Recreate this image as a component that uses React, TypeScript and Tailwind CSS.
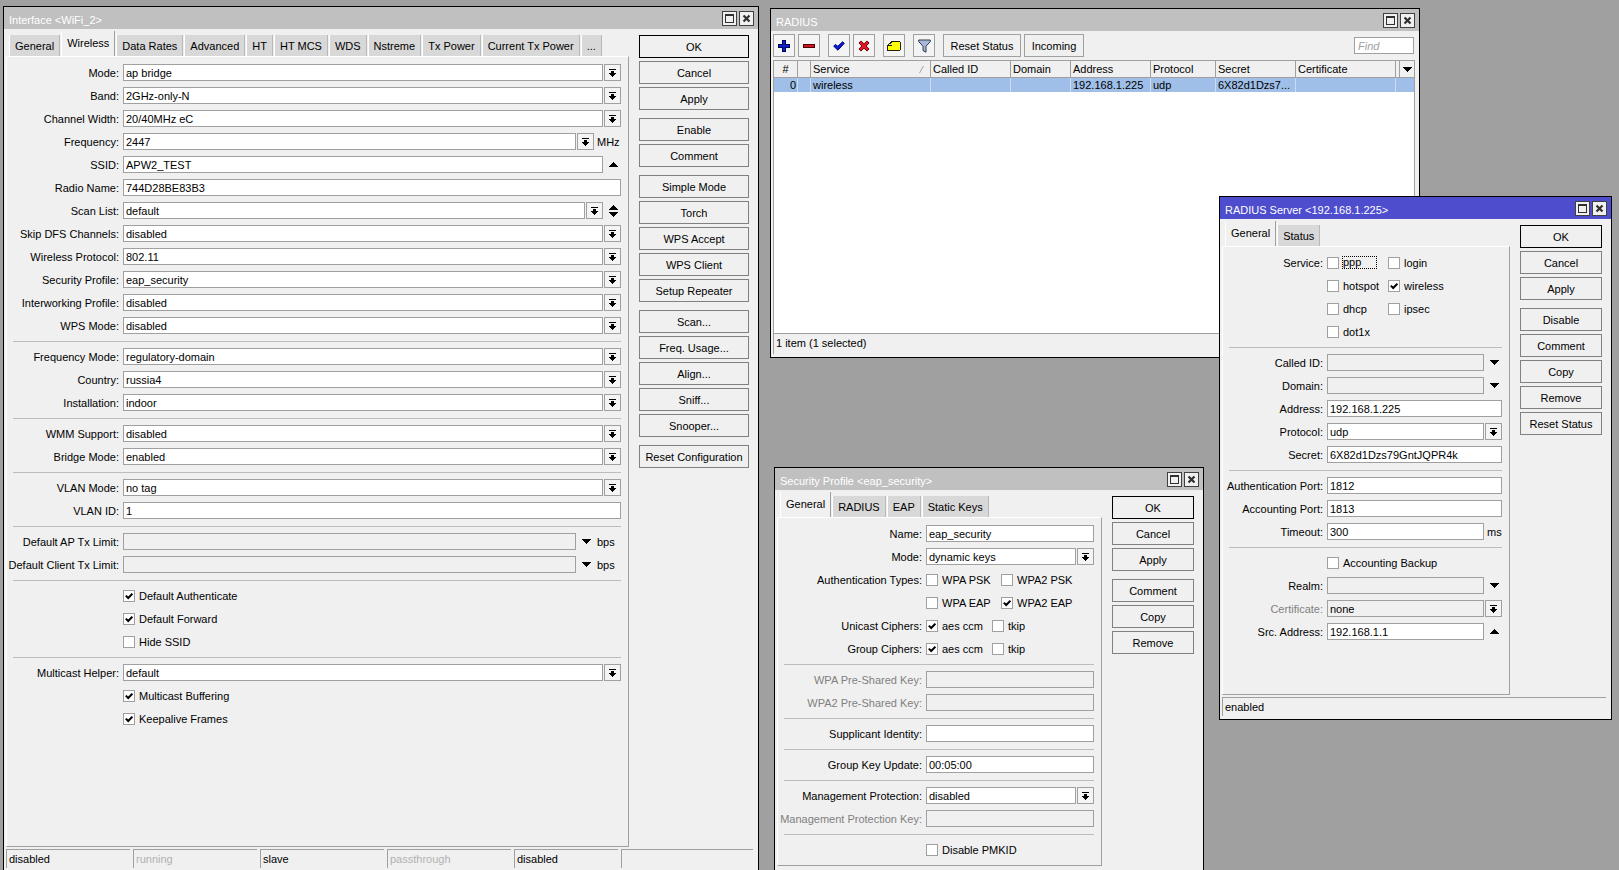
import { PropsWithChildren, ReactNode, useId } from "react";
import clsx from "clsx";

type Arrow = "drop" | "down" | "up" | "both";

const DropIcon = () => (
  <svg width="7" height="8" viewBox="0 0 7 8" shapeRendering="crispEdges" aria-hidden="true">
    <path d="M0 0h7v1H0zM2 2h3v2h2v1H6v1H5v1H4v1H3V7H2V6H1V5H0V4h2z" />
  </svg>
);

const DownIcon = () => (
  <svg width="9" height="5" viewBox="0 0 9 5" shapeRendering="crispEdges" aria-hidden="true">
    <path d="M0 0h9v1H8v1H7v1H6v1H5v1H4V4H3V3H2V2H1V1H0z" />
  </svg>
);

const UpIcon = () => (
  <svg width="9" height="5" viewBox="0 0 9 5" shapeRendering="crispEdges" aria-hidden="true">
    <path d="M0 5h9V4H8V3H7V2H6V1H5V0H4v1H3v1H2v1H1v1H0z" />
  </svg>
);

const CheckIcon = () => (
  <svg
    width="8"
    height="8"
    viewBox="0 0 8 8"
    className="pointer-events-none absolute left-0.5 top-0.5 hidden peer-checked:block"
    aria-hidden="true"
  >
    <path d="M.8 3.6l2.4 2.4L7.4 1.6" fill="none" stroke="#000" strokeWidth="2" />
  </svg>
);

const ArrowButton = ({ kind, label }: { kind: Arrow; label: string }) => (
  <button
    type="button"
    aria-label={`${label} ${kind}`}
    className={clsx(
      "flex h-[17px] w-[17px] shrink-0 flex-col items-center justify-center gap-0.5",
      kind === "drop" ? "border border-[#a0a0a0] bg-[#f4f4f4]" : "pl-0.5",
    )}
  >
    {kind === "drop" && <DropIcon />}
    {(kind === "up" || kind === "both") && <UpIcon />}
    {(kind === "down" || kind === "both") && <DownIcon />}
  </button>
);

const Row = ({ label, htmlFor, muted, children }: PropsWithChildren<{ label?: string; htmlFor?: string; muted?: boolean }>) => (
  <div className="col-span-2 grid h-[17px] grid-cols-subgrid items-center">
    {label ? (
      <label htmlFor={htmlFor} className={clsx("flex justify-end whitespace-nowrap", muted && "text-[#808080]")}>
        {label}:
      </label>
    ) : (
      <span />
    )}
    <div className="flex min-w-0 items-center gap-px">{children}</div>
  </div>
);

interface FieldProps {
  label: string;
  value?: string;
  arrows?: Arrow[];
  unit?: string;
  off?: boolean;
  muted?: boolean;
}

const Field = ({ label, value = "", arrows = [], unit, off, muted }: FieldProps) => {
  const id = useId();
  const box = clsx(
    "h-[17px] min-w-0 flex-1 appearance-none rounded-none border border-[#a0a0a0] px-0.5 leading-[15px] outline-none",
    off ? "bg-[#f0f0f0]" : "bg-white",
  );
  return (
    <Row label={label} htmlFor={id} muted={muted}>
      {arrows[0] === "drop" ? (
        <select id={id} className={clsx(box, "pt-px")} defaultValue={value}>
          <option>{value}</option>
        </select>
      ) : (
        <input id={id} type="text" className={box} defaultValue={value} />
      )}
      {arrows.map((kind) => (
        <ArrowButton key={kind} kind={kind} label={label} />
      ))}
      {unit && <span className={clsx("pl-0.5", unit === "ms" ? "w-[17px]" : "w-[26px]")}>{unit}</span>}
    </Row>
  );
};

const Check = ({ label, checked, focused, className }: { label: string; checked?: boolean; focused?: boolean; className?: string }) => (
  <label className={clsx("flex items-center gap-1 whitespace-nowrap", className)}>
    <span className="relative size-3 shrink-0">
      <input
        type="checkbox"
        defaultChecked={checked}
        className="peer block size-3 appearance-none border border-[#a0a0a0] bg-white"
      />
      <CheckIcon />
    </span>
    <span className={clsx(focused && "w-[33px] leading-[11px] outline-1 outline-dotted outline-black")}>{label}</span>
  </label>
);

const Divider = () => <hr className="col-span-2 h-0.5 border-0 border-b border-[#bcbcbc]" />;

const TitleButton = ({ label, children }: PropsWithChildren<{ label: string }>) => (
  <button
    type="button"
    aria-label={label}
    className="flex size-[15px] items-center justify-center border border-[#404040] bg-[#f0f0f0] text-[#303030]"
  >
    {children}
  </button>
);

const Window = ({ title, active, className, children }: PropsWithChildren<{ title: string; active?: boolean; className: string }>) => (
  <section className={clsx("absolute flex flex-col border border-black bg-[#f0f0f0]", className)}>
    <header
      className={clsx(
        "flex h-[22px] shrink-0 items-center gap-0.5 pl-[5px] pr-1 text-white",
        active ? "bg-[#4d4dcd]" : "bg-[#c0c0c0]",
      )}
    >
      <h2 className="flex-1 pt-[3px]">{title}</h2>
      <TitleButton label="Maximize">
        <svg width="9" height="9" viewBox="0 0 9 9" shapeRendering="crispEdges" aria-hidden="true">
          <path d="M0 0h9v9H0zM1 2v6h7V2z" fill="currentColor" fillRule="evenodd" />
        </svg>
      </TitleButton>
      <TitleButton label="Close">
        <svg width="9" height="9" viewBox="0 0 9 9" aria-hidden="true">
          <path d="M1.5 1.5l6 6M7.5 1.5l-6 6" stroke="currentColor" strokeWidth="2.2" />
        </svg>
      </TitleButton>
    </header>
    {children}
  </section>
);

const Tabs = ({ items, current }: { items: string[]; current: string }) => (
  <div role="tablist" className="flex h-[27px] items-end gap-px pl-[3px]">
    {items.map((item) => (
      <button
        key={item}
        type="button"
        role="tab"
        aria-selected={item === current}
        className={clsx(
          "whitespace-nowrap border-l border-r border-l-white px-[5px]",
          item === current
            ? "-mb-px h-[26px] border-r-[#a0a0a0] bg-[#f0f0f0] pb-0.5"
            : "h-[21px] border-r-[#b8b8b8] bg-[#d8d8d8]",
        )}
      >
        {item}
      </button>
    ))}
  </div>
);

const Actions = ({ groups, className }: { groups: string[][]; className: string }) => (
  <div className={clsx("ml-2.5 mr-[9px] flex shrink-0 flex-col gap-2 pt-1.5", className)}>
    {groups.map((group) => (
      <div key={group[0]} className="flex flex-col gap-[3px]">
        {group.map((name) => (
          <button
            key={name}
            type="button"
            className={clsx("h-[23px] whitespace-nowrap border", name === "OK" ? "border-black" : "border-[#808080]")}
          >
            {name}
          </button>
        ))}
      </div>
    ))}
  </div>
);

interface FormProps {
  tabs: string[];
  tab: string;
  groups: string[][];
  actionsClass: string;
  panelClass: string;
}

const Form = ({ tabs, tab, groups, actionsClass, panelClass, children }: PropsWithChildren<FormProps>) => (
  <div className="flex flex-1">
    <div className="flex min-w-0 flex-1 flex-col pl-0.5">
      <Tabs items={tabs} current={tab} />
      <div
        className={clsx(
          "grid flex-1 content-start gap-x-1 gap-y-1.5 border border-b-[#a0a0a0] border-l-white border-r-[#a0a0a0] border-t-white pl-1.5 pr-[7px] pt-[7px]",
          panelClass,
        )}
      >
        {children}
      </div>
    </div>
    <Actions groups={groups} className={actionsClass} />
  </div>
);

const StatusCell = ({ className, children }: { className?: string; children?: ReactNode }) => (
  <div className={clsx("h-[19px] border-l border-t border-[#a0a0a0] pl-0.5 leading-[18px]", className)}>{children}</div>
);

const InterfaceWindow = () => (
  <Window title="Interface <WiFi_2>" className="-bottom-0.5 left-[3px] top-1.5 w-[756px]">
    <Form
      tabs={["General", "Wireless", "Data Rates", "Advanced", "HT", "HT MCS", "WDS", "Nstreme", "Tx Power", "Current Tx Power", "..."]}
      tab="Wireless"
      panelClass="grid-cols-[106px_1fr]"
      actionsClass="w-[110px]"
      groups={[
        ["OK", "Cancel", "Apply"],
        ["Enable", "Comment"],
        ["Simple Mode", "Torch", "WPS Accept", "WPS Client", "Setup Repeater"],
        ["Scan...", "Freq. Usage...", "Align...", "Sniff...", "Snooper..."],
        ["Reset Configuration"],
      ]}
    >
      <Field label="Mode" value="ap bridge" arrows={["drop"]} />
      <Field label="Band" value="2GHz-only-N" arrows={["drop"]} />
      <Field label="Channel Width" value="20/40MHz eC" arrows={["drop"]} />
      <Field label="Frequency" value="2447" arrows={["drop"]} unit="MHz" />
      <Field label="SSID" value="APW2_TEST" arrows={["up"]} />
      <Field label="Radio Name" value="744D28BE83B3" />
      <Field label="Scan List" value="default" arrows={["drop", "both"]} />
      <Field label="Skip DFS Channels" value="disabled" arrows={["drop"]} />
      <Field label="Wireless Protocol" value="802.11" arrows={["drop"]} />
      <Field label="Security Profile" value="eap_security" arrows={["drop"]} />
      <Field label="Interworking Profile" value="disabled" arrows={["drop"]} />
      <Field label="WPS Mode" value="disabled" arrows={["drop"]} />
      <Divider />
      <Field label="Frequency Mode" value="regulatory-domain" arrows={["drop"]} />
      <Field label="Country" value="russia4" arrows={["drop"]} />
      <Field label="Installation" value="indoor" arrows={["drop"]} />
      <Divider />
      <Field label="WMM Support" value="disabled" arrows={["drop"]} />
      <Field label="Bridge Mode" value="enabled" arrows={["drop"]} />
      <Divider />
      <Field label="VLAN Mode" value="no tag" arrows={["drop"]} />
      <Field label="VLAN ID" value="1" />
      <Divider />
      <Field label="Default AP Tx Limit" arrows={["down"]} unit="bps" off />
      <Field label="Default Client Tx Limit" arrows={["down"]} unit="bps" off />
      <Divider />
      <Row>
        <Check label="Default Authenticate" checked />
      </Row>
      <Row>
        <Check label="Default Forward" checked />
      </Row>
      <Row>
        <Check label="Hide SSID" />
      </Row>
      <Divider />
      <Field label="Multicast Helper" value="default" arrows={["drop"]} />
      <Row>
        <Check label="Multicast Buffering" checked />
      </Row>
      <Row>
        <Check label="Keepalive Frames" checked />
      </Row>
    </Form>
    <footer className="flex gap-[3px] pb-[3px] pl-0.5 pr-[5px] pt-0.5">
      <StatusCell className="w-[124px]">disabled</StatusCell>
      <StatusCell className="w-[124px] text-[#b0b0b0]">running</StatusCell>
      <StatusCell className="w-[124px]">slave</StatusCell>
      <StatusCell className="w-[124px] text-[#b0b0b0]">passthrough</StatusCell>
      <StatusCell className="w-[104px]">disabled</StatusCell>
      <StatusCell className="flex-1" />
    </footer>
  </Window>
);

const ToolButton = ({ label, className, children }: PropsWithChildren<{ label: string; className?: string }>) => (
  <button
    type="button"
    aria-label={label}
    className={clsx("flex h-[23px] w-[22px] items-center justify-center border border-[#a0a0a0] bg-[#f4f4f4]", className)}
  >
    {children}
  </button>
);

const Toolbar = () => (
  <div className="flex items-center gap-[3px] py-[3px] pl-0.5 pr-[5px]">
    <ToolButton label="Add">
      <svg width="12" height="12" viewBox="0 0 12 12" shapeRendering="crispEdges" aria-hidden="true">
        <path d="M4 0h4v4h4v4H8v4H4V8H0V4h4z" fill="#000050" />
        <path d="M5 1h2v4h4v2H7v4H5V7H1V5h4z" fill="#0a1ed2" />
      </svg>
    </ToolButton>
    <ToolButton label="Remove">
      <svg width="12" height="4" viewBox="0 0 12 4" shapeRendering="crispEdges" aria-hidden="true">
        <path d="M0 0h12v4H0z" fill="#500000" />
        <path d="M1 1h10v2H1z" fill="#d2141e" />
      </svg>
    </ToolButton>
    <ToolButton label="Enable" className="ml-[5px]">
      <svg width="12" height="10" viewBox="0 0 12 10" aria-hidden="true">
        <path d="M.7 5.2l1.7-1.7 2.4 1.8L9.6.8l1.7 1.5-6.4 6.9z" fill="#0a1ed2" stroke="#000080" />
      </svg>
    </ToolButton>
    <ToolButton label="Disable">
      <svg width="12" height="12" viewBox="0 0 13 13" aria-hidden="true">
        <path
          d="M1 3.2L3.2 1l3.3 3.2L9.8 1 12 3.2 8.8 6.5 12 9.8 9.8 12 6.5 8.8 3.2 12 1 9.8l3.2-3.3z"
          fill="#e01822"
          stroke="#600000"
        />
      </svg>
    </ToolButton>
    <ToolButton label="Comment" className="ml-[5px]">
      <svg width="14" height="10" viewBox="0 0 14 10" shapeRendering="crispEdges" aria-hidden="true">
        <path d="M4 0h9v1h1v8h-1v1H0V4h1V3h1V2h1V1h1z" fill="#202000" />
        <path d="M5 1h8v8H1V5h4z" fill="#ffff00" />
        <path d="M2 3h2V2h1v2H2z" fill="#e8e890" />
      </svg>
    </ToolButton>
    <ToolButton label="Filter" className="ml-[5px]">
      <svg width="13" height="14" viewBox="0 0 13 14" aria-hidden="true">
        <path d="M.7 1h11.6v1.6L8 7.2v6L5 11.6V7.2L.7 2.6z" fill="#a8b8dc" stroke="#303848" />
      </svg>
    </ToolButton>
    <button type="button" className="ml-[5px] h-[23px] w-[78px] border border-[#a0a0a0]">
      Reset Status
    </button>
    <button type="button" className="h-[23px] w-[60px] border border-[#a0a0a0]">
      Incoming
    </button>
    <input
      type="text"
      aria-label="Find"
      placeholder="Find"
      className="ml-auto h-[17px] w-[60px] border border-[#a0a0a0] bg-white px-[3px] italic leading-[15px] placeholder:text-[#a0a0a0]"
    />
  </div>
);

const columns = [
  { name: "#", value: "0", width: "w-6" },
  { name: "", value: "", width: "w-[13px]" },
  { name: "Service", value: "wireless", width: "w-[120px]" },
  { name: "Called ID", value: "", width: "w-20" },
  { name: "Domain", value: "", width: "w-[60px]" },
  { name: "Address", value: "192.168.1.225", width: "w-20" },
  { name: "Protocol", value: "udp", width: "w-[65px]" },
  { name: "Secret", value: "6X82d1Dzs7...", width: "w-20" },
  { name: "Certificate", value: "", width: "w-[100px]" },
];

const RadiusWindow = () => (
  <Window title="RADIUS" className="left-[770px] top-2 h-[350px] w-[650px]">
    <Toolbar />
    <div className="ml-0.5 mr-1 flex-1 border border-[#a0a0a0] bg-white">
      <table className="w-full table-fixed border-separate border-spacing-0 text-left">
        <thead>
          <tr className="h-[17px] bg-[#f0f0f0]">
            {columns.map(({ name, width }) => (
              <th
                key={name}
                className={clsx(
                  "whitespace-nowrap border-b border-r border-[#a0a0a0] p-0 pt-px font-normal leading-[15px]",
                  width,
                  name === "#" ? "text-center" : "pl-0.5",
                )}
              >
                {name === "Service" ? (
                  <span className="flex items-center justify-between pr-1.5">
                    {name}
                    <svg width="5" height="7" viewBox="0 0 5 7" aria-hidden="true">
                      <path d="M.5 7L4.5 0" stroke="#a0a0a0" />
                    </svg>
                  </span>
                ) : (
                  name
                )}
              </th>
            ))}
            <th className="w-1 border-b border-r border-[#a0a0a0] p-0" />
            <th className="border-b border-[#a0a0a0] p-0">
              <button type="button" aria-label="Columns" className="flex w-full justify-center">
                <DownIcon />
              </button>
            </th>
          </tr>
        </thead>
        <tbody>
          <tr className="h-3.5 bg-[#9fbfe8]">
            {columns.map(({ name, value }) => (
              <td
                key={name}
                className={clsx(
                  "whitespace-nowrap border-r border-[#c8dcf4] p-0 leading-[14px]",
                  name === "#" ? "pr-px text-right" : "pl-0.5",
                )}
              >
                {value}
              </td>
            ))}
            <td colSpan={2} className="p-0" />
          </tr>
        </tbody>
      </table>
    </div>
    <footer className="mb-[3px] ml-0.5 h-5 border-l border-[#a0a0a0] pl-0.5 leading-[18px]">1 item (1 selected)</footer>
  </Window>
);

const SecurityProfileWindow = () => (
  <Window title="Security Profile <eap_security>" className="left-[774px] top-[467px] w-[430px]">
    <Form
      tabs={["General", "RADIUS", "EAP", "Static Keys"]}
      tab="General"
      panelClass="grid-cols-[138px_1fr] pb-[7px]"
      actionsClass="w-[82px]"
      groups={[
        ["OK", "Cancel", "Apply"],
        ["Comment", "Copy", "Remove"],
      ]}
    >
      <Field label="Name" value="eap_security" />
      <Field label="Mode" value="dynamic keys" arrows={["drop"]} />
      <Row label="Authentication Types">
        <Check label="WPA PSK" className="w-[74px]" />
        <Check label="WPA2 PSK" />
      </Row>
      <Row>
        <Check label="WPA EAP" className="w-[74px]" />
        <Check label="WPA2 EAP" checked />
      </Row>
      <Row label="Unicast Ciphers">
        <Check label="aes ccm" checked className="w-[65px]" />
        <Check label="tkip" />
      </Row>
      <Row label="Group Ciphers">
        <Check label="aes ccm" checked className="w-[65px]" />
        <Check label="tkip" />
      </Row>
      <Divider />
      <Field label="WPA Pre-Shared Key" off muted />
      <Field label="WPA2 Pre-Shared Key" off muted />
      <Divider />
      <Field label="Supplicant Identity" />
      <Divider />
      <Field label="Group Key Update" value="00:05:00" />
      <Divider />
      <Field label="Management Protection" value="disabled" arrows={["drop"]} />
      <Field label="Management Protection Key" off muted />
      <Divider />
      <Row>
        <Check label="Disable PMKID" />
      </Row>
    </Form>
    <footer className="h-6" />
  </Window>
);

const RadiusServerWindow = () => (
  <Window title="RADIUS Server <192.168.1.225>" active className="left-[1219px] top-[196px] w-[393px]">
    <Form
      tabs={["General", "Status"]}
      tab="General"
      panelClass="grid-cols-[94px_1fr] pb-[54px]"
      actionsClass="w-[82px]"
      groups={[
        ["OK", "Cancel", "Apply"],
        ["Disable", "Comment", "Copy", "Remove", "Reset Status"],
      ]}
    >
      <Row label="Service">
        <Check label="ppp" focused className="w-[60px]" />
        <Check label="login" />
      </Row>
      <Row>
        <Check label="hotspot" className="w-[60px]" />
        <Check label="wireless" checked />
      </Row>
      <Row>
        <Check label="dhcp" className="w-[60px]" />
        <Check label="ipsec" />
      </Row>
      <Row>
        <Check label="dot1x" />
      </Row>
      <Divider />
      <Field label="Called ID" arrows={["down"]} off />
      <Field label="Domain" arrows={["down"]} off />
      <Field label="Address" value="192.168.1.225" />
      <Field label="Protocol" value="udp" arrows={["drop"]} />
      <Field label="Secret" value="6X82d1Dzs79GntJQPR4k" />
      <Divider />
      <Field label="Authentication Port" value="1812" />
      <Field label="Accounting Port" value="1813" />
      <Field label="Timeout" value="300" unit="ms" />
      <Divider />
      <Row>
        <Check label="Accounting Backup" />
      </Row>
      <Field label="Realm" arrows={["down"]} off />
      <Field label="Certificate" value="none" arrows={["drop"]} off muted />
      <Field label="Src. Address" value="192.168.1.1" arrows={["up"]} />
    </Form>
    <footer className="pb-[3px] pl-0.5 pr-[5px] pt-0.5">
      <StatusCell>enabled</StatusCell>
    </footer>
  </Window>
);

export default function App() {
  return (
    <main className="relative h-screen overflow-hidden bg-[#a0a0a0] font-['Liberation_Sans',Arial,sans-serif] text-[11px] leading-4 text-black">
      <InterfaceWindow />
      <RadiusWindow />
      <SecurityProfileWindow />
      <RadiusServerWindow />
    </main>
  );
}
